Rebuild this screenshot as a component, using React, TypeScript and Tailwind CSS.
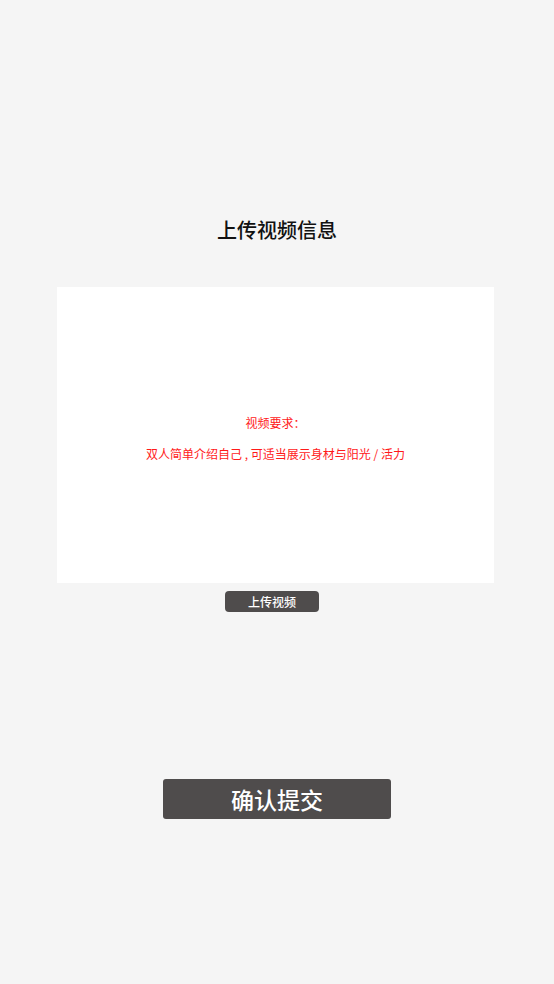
export default function App() {
  return (
    <div
      className="flex min-h-[984px] w-full flex-col items-start bg-[#f5f5f5]"
      style={{ fontFamily: '"Noto Sans CJK SC", "Noto Sans", sans-serif' }}
    >
      <h1 className="mt-[216px] h-[28px] self-center text-[20px] leading-[28px] font-medium text-[#111]">
        上传视频信息
      </h1>

      <div className="mt-[43px] ml-[57px] flex h-[296px] w-[437px] flex-col items-center justify-center gap-[16px] bg-white pt-[6px] text-[12px] leading-[15px] text-[#ff1a1a]">
        <p>视频要求：</p>
        <p>双人简单介绍自己 , 可适当展示身材与阳光 / 活力</p>
      </div>

      <button className="mt-[8px] ml-[225px] flex h-[21px] w-[94px] items-center justify-center rounded-[4px] bg-[#4f4c4c] text-[12px] leading-none font-medium text-white">
        上传视频
      </button>

      <button className="mt-[167px] ml-[163px] flex h-[40px] w-[228px] items-center justify-center rounded-[3px] bg-[#4f4c4c] text-[23px] leading-none font-medium text-white">
        确认提交
      </button>
    </div>
  )
}
